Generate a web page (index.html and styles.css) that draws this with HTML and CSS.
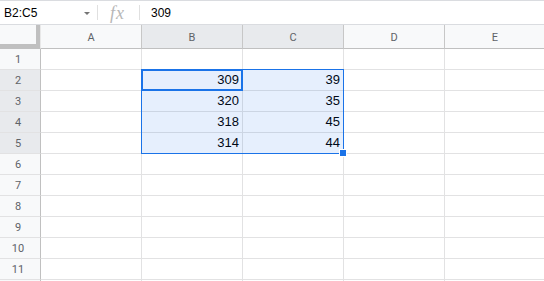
FILE: index.html
```html
<!DOCTYPE html>
<html>
<head>
<meta charset="utf-8">
<link rel="stylesheet" href="styles.css">
</head>
<body>
<div class="fbar">
  <div class="namebox"><span class="name">B2:C5</span><span class="caret"></span></div>
  <div class="sep"></div>
  <div class="fx">fx</div>
  <div class="sep"></div>
  <div class="ftext">309</div>
</div>
<div class="sheet">
  <div class="grid">
    <div class="corner"></div>
    <div class="ch">A</div><div class="ch sel">B</div><div class="ch sel">C</div><div class="ch">D</div><div class="ch">E</div>

    <div class="rh">1</div><div class="c"></div><div class="c"></div><div class="c"></div><div class="c"></div><div class="c"></div>
    <div class="rh sel">2</div><div class="c"></div><div class="c num">309</div><div class="c num">39</div><div class="c"></div><div class="c"></div>
    <div class="rh sel">3</div><div class="c"></div><div class="c num">320</div><div class="c num">35</div><div class="c"></div><div class="c"></div>
    <div class="rh sel">4</div><div class="c"></div><div class="c num">318</div><div class="c num">45</div><div class="c"></div><div class="c"></div>
    <div class="rh sel">5</div><div class="c"></div><div class="c num">314</div><div class="c num">44</div><div class="c"></div><div class="c"></div>
    <div class="rh">6</div><div class="c"></div><div class="c"></div><div class="c"></div><div class="c"></div><div class="c"></div>
    <div class="rh">7</div><div class="c"></div><div class="c"></div><div class="c"></div><div class="c"></div><div class="c"></div>
    <div class="rh">8</div><div class="c"></div><div class="c"></div><div class="c"></div><div class="c"></div><div class="c"></div>
    <div class="rh">9</div><div class="c"></div><div class="c"></div><div class="c"></div><div class="c"></div><div class="c"></div>
    <div class="rh">10</div><div class="c"></div><div class="c"></div><div class="c"></div><div class="c"></div><div class="c"></div>
    <div class="rh">11</div><div class="c"></div><div class="c"></div><div class="c"></div><div class="c"></div><div class="c"></div>
    <div class="rh"></div><div class="c"></div><div class="c"></div><div class="c"></div><div class="c"></div><div class="c"></div>
  </div>
  <div class="range"></div>
  <div class="active"></div>
  <div class="handle"></div>
</div>
</body>
</html>
```

FILE: styles.css
```css
html, body {
  margin: 0;
  padding: 0;
  background: #fff;
  overflow: hidden;
}
body {
  width: 544px;
  height: 281px;
  font-family: "Liberation Sans", Arial, sans-serif;
}
.fbar {
  box-sizing: border-box;
  height: 25px;
  border-top: 1px solid #dadce0;
  border-bottom: 1px solid #dadce0;
  display: flex;
  align-items: center;
}
.namebox {
  width: 97px;
  display: flex;
  align-items: center;
  box-sizing: border-box;
  padding-left: 4px;
}
.name {
  font-size: 12px;
  color: #000;
  flex: 1;
}
.caret {
  width: 0;
  height: 0;
  border-left: 3px solid transparent;
  border-right: 3px solid transparent;
  border-top: 3px solid #757575;
  margin-right: 7px;
  margin-top: 1px;
}
.sep {
  width: 1px;
  height: 15px;
  background: #e0e0e0;
}
.fx {
  width: 41px;
  box-sizing: border-box;
  padding-left: 12px;
  font-family: "Liberation Serif", "Times New Roman", serif;
  font-style: italic;
  font-size: 18px;
  color: #b7b7b7;
  line-height: 20px;
  letter-spacing: 1px;
}
.ftext {
  padding-left: 11px;
  font-size: 12px;
  color: #000;
}
.sheet {
  position: relative;
}
.grid {
  display: grid;
  grid-template-columns: 41px 101px 101px 101px 101px 101px;
  grid-template-rows: 24px;
  grid-auto-rows: 21px;
}
.grid > div {
  box-sizing: border-box;
}
.corner {
  background: #f8f9fa;
  border-right: 1px solid #e8e8e8;
  border-bottom: 1px solid #c0c0c0;
  box-shadow: inset -4px -4px 0 #c0c0c0;
}
.ch {
  background: #f8f9fa;
  border-right: 1px solid #c7c7c7;
  border-bottom: 1px solid #c0c0c0;
  font-family: Roboto, "Liberation Sans", Arial, sans-serif;
  font-size: 11px;
  color: #5f6368;
  display: flex;
  align-items: center;
  justify-content: center;
  padding-top: 1px;
}
.rh {
  background: #f8f9fa;
  border-right: 1px solid #c0c0c0;
  border-bottom: 1px solid #e2e2e3;
  font-family: Roboto, "Liberation Sans", Arial, sans-serif;
  font-size: 11px;
  color: #5f6368;
  display: flex;
  align-items: center;
  justify-content: center;
  padding-right: 4px;
}
.sel {
  background: #e8eaed;
}
.c {
  border-right: 1px solid #e2e2e3;
  border-bottom: 1px solid #e2e2e3;
}
.num {
  text-align: right;
  padding-right: 3px;
  font-size: 13px;
  line-height: 20px;
  color: #000;
}
.range {
  position: absolute;
  left: 141px;
  top: 44px;
  width: 203px;
  height: 85px;
  box-sizing: border-box;
  border: 1px solid #1a73e8;
  background: rgba(14, 101, 235, 0.1);
}
.active {
  position: absolute;
  left: 141px;
  top: 44px;
  width: 102px;
  height: 22px;
  box-sizing: border-box;
  border: 2px solid #1a73e8;
}
.handle {
  position: absolute;
  left: 339px;
  top: 124px;
  width: 6px;
  height: 6px;
  background: #1a73e8;
  border: 1px solid #fff;
}
```
